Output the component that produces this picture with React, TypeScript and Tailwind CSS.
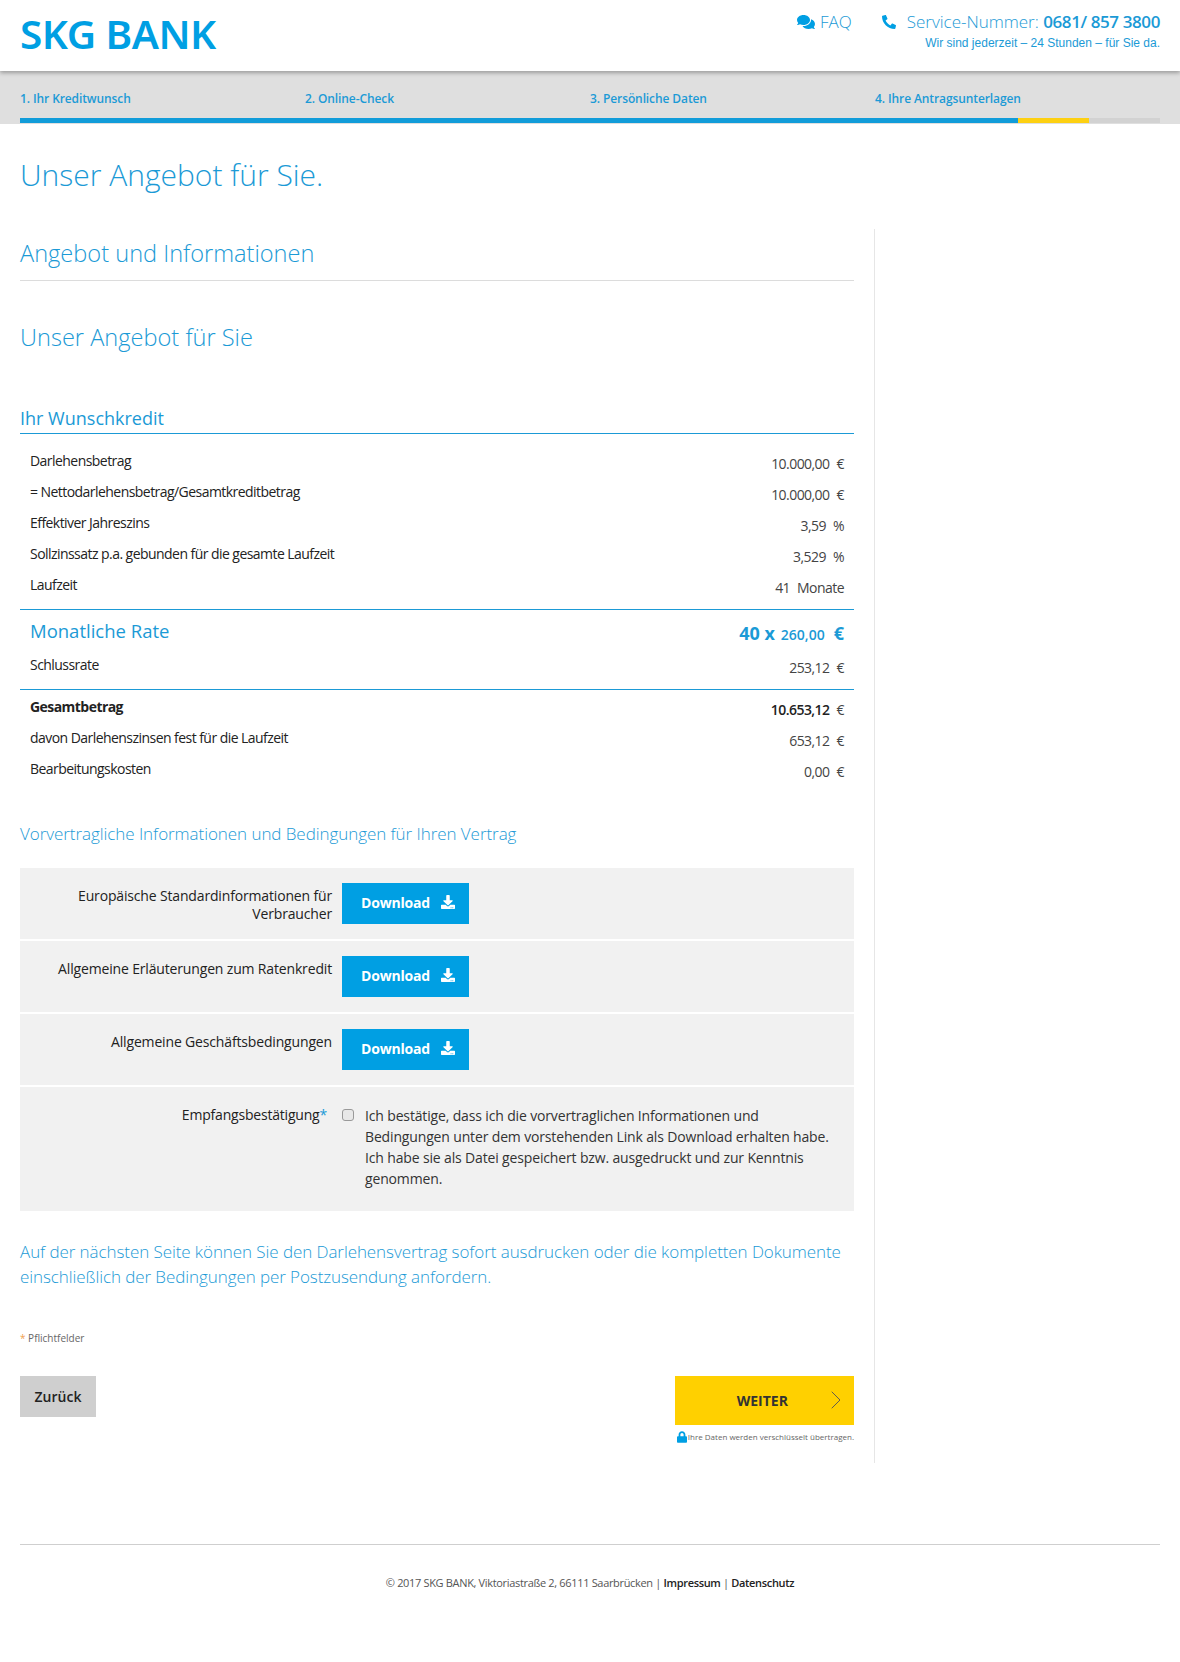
import { ChevronRight } from "lucide-react";
import { FaComments, FaDownload, FaLock, FaPhone } from "react-icons/fa";

const steps = ["1. Ihr Kreditwunsch", "2. Online-Check", "3. Persönliche Daten", "4. Ihre Antragsunterlagen"];

const creditRows = [
  { label: "Darlehensbetrag", value: "10.000,00", unit: "€" },
  { label: "= Nettodarlehensbetrag/Gesamtkreditbetrag", value: "10.000,00", unit: "€" },
  { label: "Effektiver Jahreszins", value: "3,59", unit: "%" },
  { label: "Sollzinssatz p.a. gebunden für die gesamte Laufzeit", value: "3,529", unit: "%" },
  { label: "Laufzeit", value: "41", unit: "Monate" },
];

const totalRows = [
  { label: "davon Darlehenszinsen fest für die Laufzeit", value: "653,12", unit: "€" },
  { label: "Bearbeitungskosten", value: "0,00", unit: "€" },
];

const documents = ["Allgemeine Erläuterungen zum Ratenkredit", "Allgemeine Geschäftsbedingungen"];

function Row({ label, value, unit, bold }: { label: string; value: string; unit: string; bold?: boolean }) {
  return (
    <div className="flex h-[31px] items-start justify-between px-[10px] text-[14px] leading-[20px] tracking-[-0.55px] text-[#222]">
      <span className={bold ? "font-bold" : "font-normal"}>{label}</span>
      <span className="flex gap-[7px] pt-[3px] text-[#444]">
        <span className={bold ? "font-semibold text-[#222]" : "font-normal"}>{value}</span>
        <span>{unit}</span>
      </span>
    </div>
  );
}

function DownloadButton() {
  return (
    <button className="flex h-[41px] w-[127px] items-center justify-between bg-[#009fe3] pb-[2px] pl-[19px] pr-[14px] text-[14px] font-bold tracking-[-0.2px] text-white">
      Download
      <FaDownload className="mb-[1px] h-[14px] w-[14px]" />
    </button>
  );
}

function DocumentRow({ label }: { label: string }) {
  return (
    <div className="flex h-[71px] gap-[10px] bg-[#f1f1f1] pt-[15px]">
      <div className="w-[312px] pt-[4px] text-right text-[14px] leading-[18px] tracking-[-0.16px] text-[#222]">{label}</div>
      <DownloadButton />
    </div>
  );
}

export default function App() {
  return (
    <div className="min-h-[1662px] bg-white font-['Open_Sans',sans-serif] text-[#222]">
      <header className="relative z-10 flex h-[71px] justify-between bg-white px-5 shadow-[0_2px_4px_rgba(0,0,0,0.3)]">
        <div className="pt-[10px] font-['Noto_Sans',sans-serif] text-[40.5px] font-semibold leading-[48px] tracking-[-0.5px] text-[#009fe3]">
          SKG BANK
        </div>
        <div className="pt-[11px] text-right text-[#1b9ad6]">
          <div className="flex h-[22px] items-center justify-end text-[17px] font-light">
            <FaComments className="mr-[5px] h-[18px] w-[18px] text-[#009fe3]" />
            <span>FAQ</span>
            <FaPhone className="ml-[30px] mr-[11px] h-[14px] w-[14px] -scale-x-100 text-[#009fe3]" />
            <span>Service-Nummer:&nbsp;</span>
            <span className="font-semibold tracking-[-0.4px]">0681/ 857 3800</span>
          </div>
          <div className="mt-[3px] font-['Liberation_Sans',sans-serif] text-[12px] leading-[14px]">
            Wir sind jederzeit – 24 Stunden – für Sie da.
          </div>
        </div>
      </header>

      <nav className="h-[53px] bg-[#dfdfdf] px-5">
        <div className="grid h-[47px] grid-cols-4 items-center pt-[9px]">
          {steps.map((step) => (
            <span key={step} className="text-[12px] font-semibold tracking-[-0.1px] text-[#1b9ad6]">
              {step}
            </span>
          ))}
        </div>
        <div className="flex h-[5px] bg-[#d2d2d2]">
          <div className="w-[998px] bg-[#119cd9]" />
          <div className="w-[71px] bg-[#fdd012]" />
        </div>
      </nav>

      <main className="px-5">
        <h1 className="pb-[32px] pt-[29px] text-[30px] font-light leading-[44px] text-[#1b9ad6]">Unser Angebot für Sie.</h1>

        <div className="flex">
          <div className="w-[834px]">
            <h2 className="h-[52px] border-b border-[#dcdcdc] pt-[7px] text-[23.6px] font-light leading-[34px] text-[#1b9ad6]">
              Angebot und Informationen
            </h2>
            <h2 className="mt-[39px] text-[23.6px] font-light leading-[34px] text-[#1b9ad6]">Unser Angebot für Sie</h2>

            <h3 className="mt-[51px] h-[29px] border-b border-[#1b9ad6] text-[18px] leading-[26px] text-[#1b9ad6]">
              Ihr Wunschkredit
            </h3>
            <div className="pt-[17px]">
              {creditRows.map((row) => (
                <Row key={row.label} {...row} />
              ))}
            </div>

            <div className="mt-[3px] flex h-[46px] items-start justify-between border-t border-[#1b9ad6] px-[10px] pt-[8px] text-[#1b9ad6]">
              <span className="text-[18.5px] leading-[26px]">Monatliche Rate</span>
              <span className="mt-[2px] flex items-baseline font-bold leading-[26px]">
                <span className="text-[18px]">40 x</span>
                <span className="ml-[6px] text-[14px] font-semibold">260,00</span>
                <span className="ml-[9px] text-[18px]">€</span>
              </span>
            </div>
            <Row label="Schlussrate" value="253,12" unit="€" />

            <div className="mt-[3px] border-t border-[#1b9ad6] pt-[7px]">
              <Row label="Gesamtbetrag" value="10.653,12" unit="€" bold />
              {totalRows.map((row) => (
                <Row key={row.label} {...row} />
              ))}
            </div>

            <p className="mt-[32px] text-[17px] font-light leading-[24px] tracking-[-0.06px] text-[#1b9ad6]">
              Vorvertragliche Informationen und Bedingungen für Ihren Vertrag
            </p>

            <div className="mt-[22px] flex flex-col gap-[2px]">
              <DocumentRow label="Europäische Standardinformationen für Verbraucher" />
              {documents.map((label) => (
                <DocumentRow key={label} label={label} />
              ))}
              <div className="flex h-[124px] bg-[#f1f1f1] pt-[19px]">
                <div className="w-[307px] text-right text-[14px] leading-[18px] tracking-[-0.2px] text-[#222]">
                  Empfangsbestätigung<span className="text-[#1b9ad6]">*</span>
                </div>
                <input
                  type="checkbox"
                  className="ml-[15px] mt-[3px] h-[12px] w-[12px] shrink-0 appearance-none rounded-[3px] border border-[#999] bg-[#e8e8e8]"
                />
                <p className="ml-[11px] mt-[-1px] w-[470px] text-[14px] leading-[21px] tracking-[-0.15px] text-[#333]">
                  Ich bestätige, dass ich die vorvertraglichen Informationen und Bedingungen unter dem vorstehenden Link als
                  Download erhalten habe. Ich habe sie als Datei gespeichert bzw. ausgedruckt und zur Kenntnis genommen.
                </p>
              </div>
            </div>

            <p className="mt-[28px] text-[17px] font-light leading-[25px] tracking-[-0.08px] text-[#1b9ad6]">
              Auf der nächsten Seite können Sie den Darlehensvertrag sofort ausdrucken oder die kompletten Dokumente
              einschließlich der Bedingungen per Postzusendung anfordern.
            </p>

            <p className="mt-[42px] text-[10px] leading-[14px] text-[#666]">
              <span className="text-[#f0a050]">*</span> Pflichtfelder
            </p>

            <div className="mt-[31px] flex items-start justify-between">
              <button className="h-[41px] w-[76px] bg-[#cfcfcf] text-[14px] font-semibold text-[#222]">Zurück</button>
              <div>
                <button className="relative h-[49px] w-[179px] bg-[#ffd000] pr-[4px] text-[14px] font-bold text-[#333]">
                  WEITER
                  <ChevronRight strokeWidth={0.7} className="absolute right-[2px] top-[8px] h-[32px] w-[32px] text-[#555]" />
                </button>
                <div className="mt-[5px] flex items-center text-[8px] leading-[14px] text-[#666]">
                  <FaLock className="ml-[2px] mr-[1px] h-[12px] w-[10px] text-[#009fe3]" />
                  Ihre Daten werden verschlüsselt übertragen.
                </div>
              </div>
            </div>
          </div>
          <div className="ml-[20px] h-[1234px] border-l border-[#e6e6e6]" />
        </div>

        <footer className="mt-[81px] border-t border-[#cfcfcf] pt-[29px] text-center text-[11px] leading-[18px] tracking-[-0.33px] text-[#555]">
          © 2017 SKG BANK, Viktoriastraße 2, 66111 Saarbrücken | <span className="font-semibold text-[#222]">Impressum</span> |{" "}
          <span className="font-semibold text-[#222]">Datenschutz</span>
        </footer>
      </main>
    </div>
  );
}
